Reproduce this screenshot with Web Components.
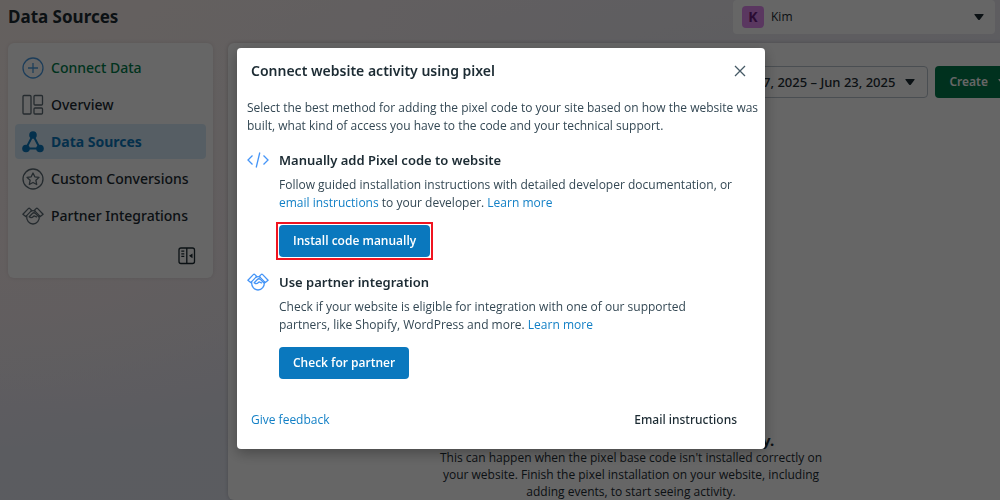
<!DOCTYPE html>
<html lang="en">
<head>
<meta charset="utf-8">
<title>Data Sources</title>
<style>
  html, body { margin: 0; height: 100%; }
  body {
    overflow: hidden;
    font: 400 12px/18px "Open Sans", "Noto Sans", sans-serif;
    color: #344854;
    --heading: "Noto Sans", "Open Sans", sans-serif;
    --ink: #1c2b33;
    --blue: #0a78be;
    --link: #1380c6;
  }
</style>
</head>
<body>
<events-manager></events-manager>

<script>
const ICONS = {
  plus: '<circle cx="11" cy="11" r="10"/><path d="M11 6v10M6 11h10"/>',
  overview: '<rect x="1" y="1.500" width="8" height="18.500" rx="1"/><rect x="12" y="1.500" width="8.500" height="9.500" rx="1"/><rect x="12" y="14" width="8.500" height="6" rx="1"/>',
  sources: '<path d="M11 4 4 17.500h14z" stroke-width="2"/><g fill="currentColor" stroke="none"><circle cx="11" cy="4" r="3.800"/><circle cx="4" cy="17.500" r="3.800"/><circle cx="18" cy="17.500" r="3.800"/></g>',
  star: '<circle cx="11" cy="11" r="10"/><path d="m11 5 1.800 3.800 4.200.600-3.100 2.900.800 4.200-3.700-2-3.700 2 .800-4.200L5 9.400l4.200-.600z" stroke-linejoin="round"/>',
  handshake: '<g stroke-linejoin="round" stroke-linecap="round"><path d="M.900 9.200 6.300 3.600q.8-.8 1.600 0l1.800 1.800-6 6.200z"/><path d="M21.100 9.200 15.700 3.600q-.8-.8-1.600 0l-1.800 1.800 6 6.200z"/><path d="M4.700 11c-.500 4.500 2.500 8 6.300 8s6.800-3.500 6.300-8"/><path d="M9 6.100c1.300-.700 2.700-.7 4 0M7.200 11.700l3.200-3.200c.9-.9 2.200-.9 3.100 0l3.300 3.200M7.200 11.700c1.300 1.200 3 1 4.200-.2l.600-.600 2.500 1"/></g>',
  code: '<path d="M5.500 6.500 1 11l4.500 4.500M16.500 6.500 21 11l-4.500 4.500M12.800 3.500 9.200 18.500"/>',
  close: '<path d="m6 6 10 10M16 6 6 16"/>',
  collapse: '<rect x="3" y="3" width="15.500" height="15.500" rx="2"/><path d="M10.800 3v15.500M5.300 6.200h3M5.300 8.800h3M5.300 11.400h3"/><path d="m13 10.800 3.500-2.400v4.800z" fill="currentColor" stroke="none"/>',
};

function define(name, html, setup) {
  const template = document.createElement('template');
  template.innerHTML = html;
  customElements.define(name, class extends HTMLElement {
    connectedCallback() {
      if (this.shadowRoot) return;
      this.attachShadow({ mode: 'open' }).append(template.content.cloneNode(true));
      if (setup) setup(this, this.shadowRoot);
    }
  });
}

define('ui-icon', `
  <style>
    :host { display: block; width: 22px; height: 22px; flex: none; }
    svg { display: block; }
  </style>
  <svg width="22" height="22" viewBox="0 0 22 22" fill="none" stroke="currentColor" stroke-width="1.300" aria-hidden="true"></svg>`,
  (el, root) => { root.querySelector('svg').innerHTML = ICONS[el.getAttribute('name')]; });

define('ui-caret', `
  <style>
    :host { display: block; flex: none; color: var(--ink); }
    svg { display: block; }
  </style>
  <svg width="10" height="6" viewBox="0 0 10 6" aria-hidden="true"><path d="M1 0h8q1.200 0 .4 1L6 5.400q-1 1-2 0L.6 1Q-.2 0 1 0z" fill="currentColor"/></svg>`);

define('nav-item', `
  <style>
    :host { display: block; }
    a {
      display: flex; align-items: center; gap: 7px;
      height: 35px; padding: 0 7px; border-radius: 4px;
      font: 500 14px/20px var(--heading); color: var(--ink); text-decoration: none; white-space: nowrap;
    }
    ui-icon { color: #5d6c75; }
    :host([tone="add"]) a { color: #00804d; }
    :host([tone="add"]) ui-icon { color: #4a9ae0; }
    :host([current]) a { background: #d8ebf9; color: var(--blue); font-weight: 700; }
    :host([current]) ui-icon { color: var(--blue); }
  </style>
  <a href="#"><ui-icon></ui-icon><slot></slot></a>`,
  (el, root) => {
    const icon = document.createElement('ui-icon');
    icon.setAttribute('name', el.getAttribute('icon'));
    root.querySelector('ui-icon').replaceWith(icon);
    if (el.hasAttribute('current')) root.querySelector('a').setAttribute('aria-current', 'page');
  });

define('side-nav', `
  <style>
    :host { display: block; }
    nav {
      display: flex; flex-direction: column; gap: 2px;
      padding: 7px; border-radius: 6px; background: #fff;
      box-shadow: 0 0 4px rgba(0, 0, 0, .1);
    }
    button {
      align-self: flex-end; margin: 10px 8px 4px 0; padding: 0;
      border: 0; background: none; color: var(--ink);
    }
  </style>
  <nav aria-label="Events Manager">
    <nav-item icon="plus" tone="add">Connect Data</nav-item>
    <nav-item icon="overview">Overview</nav-item>
    <nav-item icon="sources" current>Data Sources</nav-item>
    <nav-item icon="star">Custom Conversions</nav-item>
    <nav-item icon="handshake">Partner Integrations</nav-item>
    <button type="button" aria-label="Collapse menu"><ui-icon name="collapse"></ui-icon></button>
  </nav>`);

define('account-picker', `
  <style>
    :host { display: block; }
    label {
      display: flex; align-items: center; gap: 7px; box-sizing: border-box;
      height: 34px; padding: 0 11px 0 9px; border-radius: 4px; background: #fff;
    }
    .avatar {
      width: 22px; height: 22px; border-radius: 4px; background: #e08af0; color: #6b2080;
      font: 700 14px/22px var(--heading); text-align: center;
    }
    select {
      flex: 1; min-width: 0; appearance: none; padding: 0; border: 0; background: none;
      font: inherit; color: var(--ink);
    }
  </style>
  <label><span class="avatar" aria-hidden="true">K</span>
    <select aria-label="Account"><option>Kim</option></select>
    <ui-caret></ui-caret>
  </label>`);

define('empty-state', `
  <style>
    :host { display: block; text-align: center; color: var(--ink); }
    h2 { margin: 0; font: 700 15px/18px var(--heading); }
    p { margin: 0; line-height: 17px; }
  </style>
  <h2><slot name="title"></slot></h2>
  <p><slot></slot></p>`);

define('data-panel', `
  <style>
    :host {
      display: flex; flex-direction: column; justify-content: space-between;
      background: #fff; border-radius: 6px; box-shadow: 0 0 4px rgba(0, 0, 0, .2);
    }
    .tools { display: flex; justify-content: flex-end; gap: 7px; padding: 23px 12px 0; }
    button {
      display: flex; align-items: center; gap: 10px; box-sizing: border-box;
      height: 32px; padding: 0 12px; border-radius: 4px;
      font: 500 12px/18px var(--heading); white-space: nowrap;
    }
    .range { border: 1px solid #b8c2cc; background: #fff; color: var(--ink); font-size: 13px; }
    .create { border: 0; padding: 0 14px; background: #007a4d; color: #fff; font-weight: 600; }
    .create ui-caret { color: #fff; }
  </style>
  <div class="tools">
    <button type="button" class="range">Jun 17, 2025 – Jun 23, 2025 <ui-caret></ui-caret></button>
    <button type="button" class="create">Create <ui-caret></ui-caret></button>
  </div>
  <slot></slot>`);

define('action-button', `
  <style>
    :host { display: inline-block; vertical-align: top; }
    :host([highlight]) { outline: 2px solid #f01420; outline-offset: 1px; }
    button {
      display: block; height: 32px; padding: 0 14px; border: 0; border-radius: 4px;
      background: var(--blue); color: #fff; font: 600 12px/18px "Open Sans", sans-serif;
    }
  </style>
  <button type="button"><slot></slot></button>`);

define('setup-option', `
  <style>
    :host { display: grid; grid-template-columns: 22px 1fr; column-gap: 10px; }
    ui-icon { color: #4595f7; }
    h3 { margin: 0; font: 600 13px/22px var(--heading); color: var(--ink); }
    p { margin: 5px 0 13px; white-space: nowrap; }
  </style>
  <ui-icon></ui-icon>
  <div>
    <h3><slot name="title"></slot></h3>
    <p><slot></slot></p>
    <slot name="action"></slot>
  </div>`,
  (el, root) => {
    const icon = document.createElement('ui-icon');
    icon.setAttribute('name', el.getAttribute('icon'));
    root.querySelector('ui-icon').replaceWith(icon);
  });

define('modal-dialog', `
  <style>
    :host {
      position: fixed; inset: 0; display: flex; justify-content: center; align-items: flex-start;
      padding: 48px 0 0 2px; background: rgba(0, 0, 0, .6);
    }
    section {
      box-sizing: border-box; width: 528px; max-width: 100%; border-radius: 4px;
      padding: 12px 14px 20px 10px; background: #fff; box-shadow: 0 4px 14px rgba(0, 0, 0, .3);
    }
    header, footer { display: flex; justify-content: space-between; align-items: center; padding-left: 4px; }
    h2 { margin: 0; font: 600 14px/22px var(--heading); color: var(--ink); }
    button { padding: 0; border: 0; background: none; }
    .close { color: #465a66; }
    .body { display: flex; flex-direction: column; gap: 14px; padding: 17px 0 32px; }
  </style>
  <section role="dialog" aria-modal="true" aria-labelledby="title">
    <header>
      <h2 id="title"><slot name="title"></slot></h2>
      <button type="button" class="close" aria-label="Close"><ui-icon name="close"></ui-icon></button>
    </header>
    <div class="body"><slot></slot></div>
    <footer><slot name="footer"></slot></footer>
  </section>`);

define('events-manager', `
  <style>
    :host {
      display: flex; flex-direction: column; height: 100vh; overflow: hidden;
      background:
        radial-gradient(ellipse 60% 80% at 0 0, #fbf0ec, transparent),
        radial-gradient(ellipse 50% 40% at 0 50%, #f7ebee, transparent),
        linear-gradient(165deg, #f5eef2, #e3e5f0 60%, #e2e8f2);
    }
    .top { display: flex; justify-content: space-between; align-items: flex-start; height: 43px; padding: 0 5px 0 8px; }
    h1 { margin: 0; font: 700 17px/34px var(--heading); color: var(--ink); }
    account-picker { flex: 0 1 262px; }
    .main { flex: 1; min-height: 0; display: grid; grid-template-columns: 205px 1fr; gap: 15px; padding-left: 8px; margin-right: -34px; }
    side-nav { align-self: start; }
    p { margin: 0; }
    .intro { white-space: nowrap; }
    a { color: var(--link); text-decoration: none; }
    .plain { padding: 0; border: 0; background: none; color: var(--ink); font: 500 12px/18px var(--heading); margin-right: 14px; }
  </style>
  <div class="top">
    <h1>Data Sources</h1>
    <account-picker></account-picker>
  </div>
  <div class="main">
    <side-nav></side-nav>
    <data-panel>
      <empty-state>
        <span slot="title">Your pixel hasn't received any activity.</span>
        This can happen when the pixel base code isn't installed correctly on<br>
        your website. Finish the pixel installation on your website, including<br>
        adding events, to start seeing activity.
      </empty-state>
    </data-panel>
  </div>
  <modal-dialog>
    <span slot="title">Connect website activity using pixel</span>
    <p class="intro">Select the best method for adding the pixel code to your site based on how the website was<br>
      built, what kind of access you have to the code and your technical support.</p>
    <setup-option icon="code">
      <span slot="title">Manually add Pixel code to website</span>
      Follow guided installation instructions with detailed developer documentation, or<br>
      <a href="#">email instructions</a> to your developer. <a href="#">Learn more</a>
      <action-button slot="action" highlight>Install code manually</action-button>
    </setup-option>
    <setup-option icon="handshake">
      <span slot="title">Use partner integration</span>
      Check if your website is eligible for integration with one of our supported<br>
      partners, like Shopify, WordPress and more. <a href="#">Learn more</a>
      <action-button slot="action">Check for partner</action-button>
    </setup-option>
    <a slot="footer" href="#">Give feedback</a>
    <button slot="footer" type="button" class="plain">Email instructions</button>
  </modal-dialog>`);
</script>
</body>
</html>
